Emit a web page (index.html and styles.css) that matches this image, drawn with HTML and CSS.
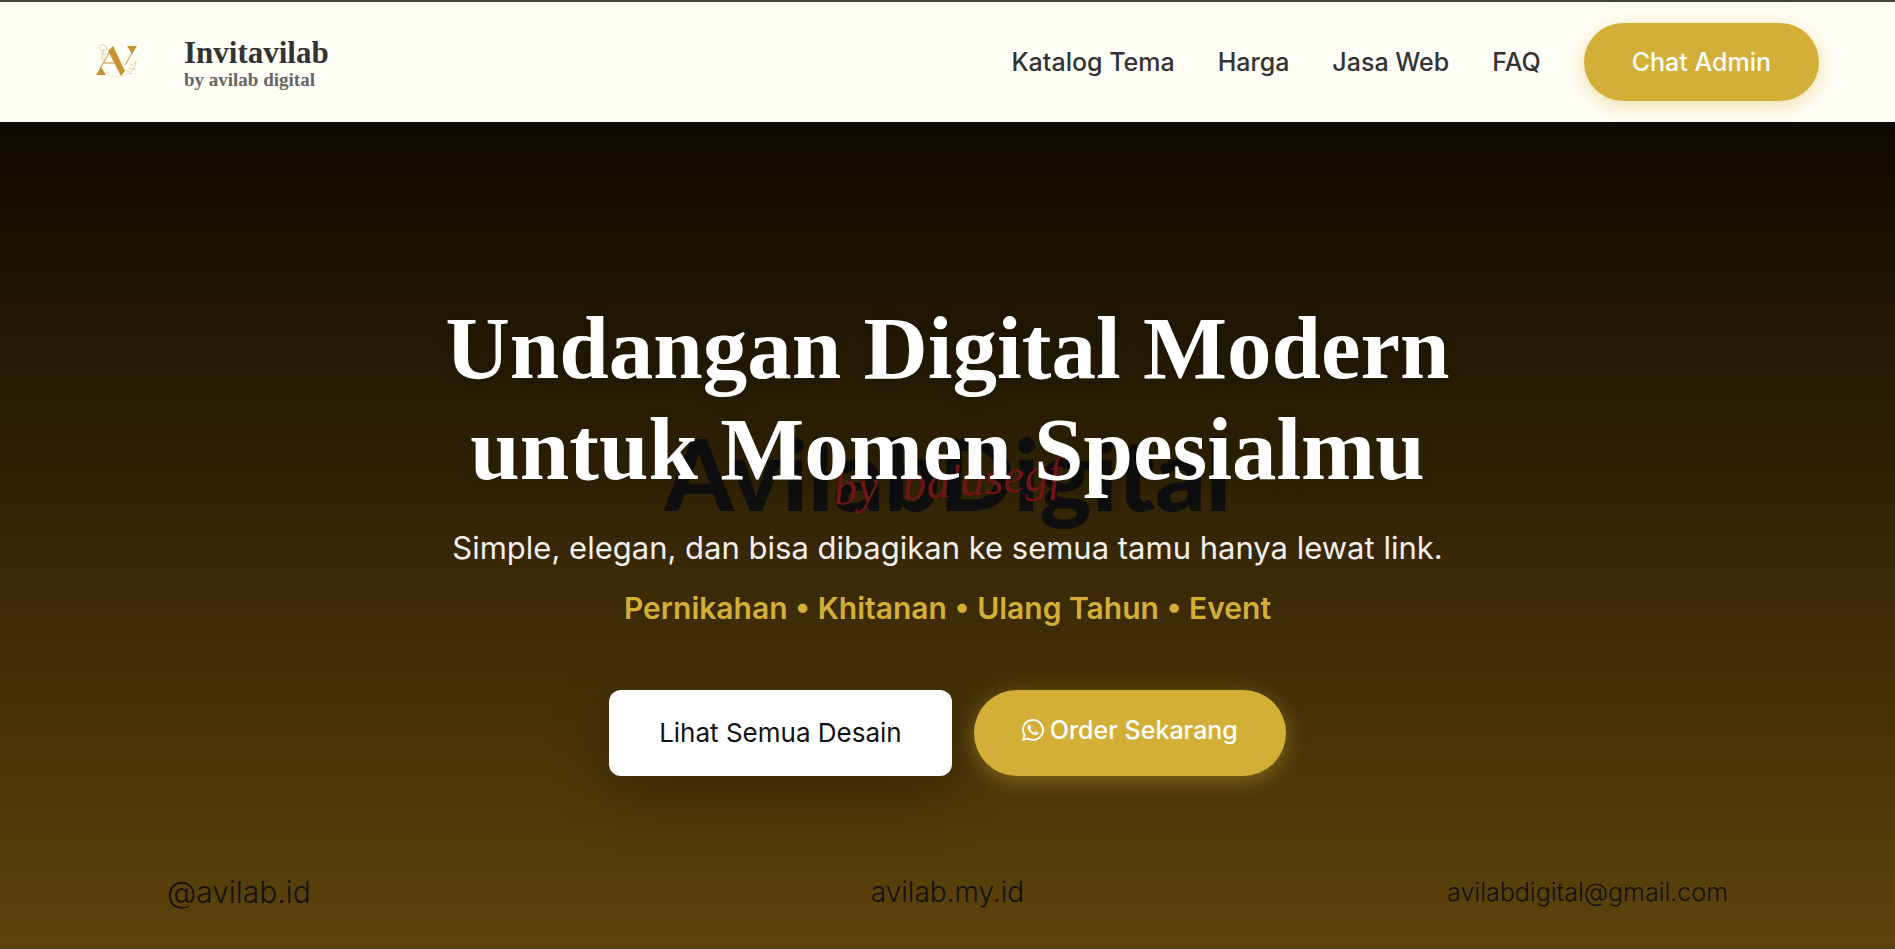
FILE: index.html
```html
<!DOCTYPE html>
<html lang="id">
<head>
    <meta charset="UTF-8">
    <meta name="viewport" content="width=device-width, initial-scale=1.0">
    <title>Invitavilab by avilab digital</title>
    <link rel="stylesheet" href="styles.css">
</head>
<body>

    <!-- Navbar -->
    <header class="navbar">
        <a href="#" class="brand">
            <svg class="brand-logo" viewBox="0 0 42 36" aria-hidden="true">
                <g fill="none" stroke="#e6d2a5" stroke-width="1">
                    <path d="M7 17C5 13 6 9 8 6M8 6a3 3 0 1 1 1-4a2 2 0 0 1-1 4M5 8l3 2M10 9l-2 3M5 13l3 1M10 14l-2 3"/>
                    <path d="M36 26c3-3 4-6 3-9M37 21l-3-1M38 19l3-1M36 25l-4-1M36 25l4 0M33 28l-3-2M33 29l3 1"/>
                    <path d="M9 25C13 35 29 36 36 26" stroke-width="0.5"/>
                </g>
                <g fill="#c5932f">
                    <path d="M12 7L17 2L29 27L25 32Z"/>
                    <path d="M31 2H41L36 10Z"/>
                    <path d="M0 31L5 23L10 31Z"/>
                </g>
                <path d="M36 9L29 21M4 25L13 9M7 19H18" fill="none" stroke="#c5932f" stroke-width="1"/>
            </svg>
            <span class="brand-text">
                <span class="brand-name">Invitavilab</span>
                <span class="brand-sub">by avilab digital</span>
            </span>
        </a>
        <nav class="menu">
            <a href="#katalog">Katalog Tema</a>
            <a href="#harga">Harga</a>
            <a href="#jasa">Jasa Web</a>
            <a href="#faq">FAQ</a>
            <a href="#chat" class="btn-chat">Chat Admin</a>
        </nav>
    </header>

    <!-- Hero -->
    <main class="hero">
        <div class="watermark" aria-hidden="true">AvilabDigital<span class="watermark-sign">by&nbsp; ba'asegf</span></div>

        <div class="hero-content">
            <h1>Undangan Digital Modern<br>untuk Momen Spesialmu</h1>
            <p class="lead">Simple, elegan, dan bisa dibagikan ke semua tamu hanya lewat link.</p>
            <p class="tagline">Pernikahan • Khitanan • Ulang Tahun • Event</p>
            <div class="actions">
                <a href="#katalog" class="btn-light">Lihat Semua Desain</a>
                <a href="#order" class="btn-order">
                    <svg class="icon-wa" viewBox="0 0 16 16" fill="currentColor" aria-hidden="true">
                        <path d="M13.601 2.326A7.85 7.85 0 0 0 7.994 0C3.627 0 .068 3.558.064 7.926c0 1.399.366 2.76 1.057 3.965L0 16l4.204-1.102a7.9 7.9 0 0 0 3.79.965h.004c4.368 0 7.926-3.558 7.93-7.93A7.9 7.9 0 0 0 13.6 2.326zM7.994 14.521a6.6 6.6 0 0 1-3.356-.92l-.24-.144-2.494.654.666-2.433-.156-.251a6.56 6.56 0 0 1-1.007-3.505c0-3.626 2.957-6.584 6.591-6.584a6.56 6.56 0 0 1 4.66 1.931 6.56 6.56 0 0 1 1.928 4.66c-.004 3.639-2.961 6.592-6.592 6.592m3.615-4.934c-.197-.099-1.17-.578-1.353-.646-.182-.065-.315-.099-.445.099-.133.197-.513.646-.627.775-.114.133-.232.148-.43.05-.197-.1-.836-.308-1.592-.985-.59-.525-.985-1.175-1.103-1.372-.114-.198-.011-.304.088-.403.087-.088.197-.232.296-.346.1-.114.133-.198.198-.33.065-.134.034-.248-.015-.347-.05-.099-.445-1.076-.612-1.47-.16-.389-.323-.335-.445-.34-.114-.007-.247-.007-.38-.007a.73.73 0 0 0-.529.247c-.182.198-.691.677-.691 1.654s.71 1.916.81 2.049c.098.133 1.394 2.132 3.383 2.992.47.205.84.326 1.129.418.475.152.904.129 1.246.08.38-.058 1.171-.48 1.338-.943.164-.464.164-.86.114-.943-.049-.084-.182-.133-.38-.232"/>
                    </svg>
                    <span>Order Sekarang</span>
                </a>
            </div>
        </div>

        <div class="contacts">
            <span class="contact contact-ig">@avilab.id</span>
            <span class="contact contact-web">avilab.my.id</span>
            <span class="contact contact-mail">avilabdigital@gmail.com</span>
        </div>
    </main>

</body>
</html>
```
FILE: styles.css
```css
:root {
    --gold: #d4af37;
    --ink: #111111;
    --cream: #fffef6;
    --serif: "Liberation Serif", serif;
    --sans: Inter, sans-serif;
}

* {
    box-sizing: border-box;
}

body {
    margin: 0;
    min-height: 100vh;
    display: flex;
    flex-direction: column;
    border-top: 2px solid #44443f;
    border-bottom: 1px solid #44443f;
    font-family: var(--sans);
}

a {
    text-decoration: none;
}

/* Navbar */
.navbar {
    display: flex;
    justify-content: space-between;
    align-items: center;
    height: 120px;
    padding: 0 76px 0 96px;
    background: var(--cream);
}

.brand {
    display: flex;
    align-items: center;
    gap: 46px;
}

.brand-logo {
    width: 42px;
    height: 36px;
}

.brand-text {
    display: flex;
    flex-direction: column;
    padding-top: 4px;
    font-family: var(--serif);
    font-weight: 700;
}

.brand-name {
    font-size: 31px;
    line-height: 32px;
    color: #333333;
}

.brand-sub {
    font-size: 19px;
    line-height: 22px;
    color: #666666;
}

.menu {
    display: flex;
    align-items: center;
    gap: 43px;
    font-size: 25px;
    font-weight: 500;
}

.menu a {
    color: #333333;
}

.menu .btn-chat {
    padding: 24px 48px;
    line-height: 30px;
    border-radius: 40px;
    background: var(--gold);
    color: #ffffff;
    box-shadow: 0 5px 20px rgba(212, 175, 55, 0.4);
}

/* Hero */
.hero {
    position: relative;
    flex: 1;
    display: flex;
    flex-direction: column;
    background: linear-gradient(#0e0900, #5d430b);
}

.watermark {
    position: absolute;
    top: 295px;
    left: 0;
    right: 0;
    text-align: center;
    font-family: Lato, sans-serif;
    font-size: 99px;
    line-height: 112px;
    font-weight: 900;
    color: #0e0e0e;
}

.watermark-sign {
    position: absolute;
    top: 8px;
    left: 0;
    right: 0;
    font-family: "Liberation Serif", cursive;
    font-size: 48px;
    font-style: italic;
    font-weight: 400;
    color: #741618;
    transform: rotate(-4deg);
}

.hero-content {
    position: relative;
    padding-top: 176px;
    text-align: center;
}

h1 {
    margin: 0;
    font-family: var(--serif);
    font-size: 89px;
    line-height: 101px;
    font-weight: 700;
    color: #ffffff;
    text-shadow: 0 4px 15px rgba(0, 0, 0, 0.2);
}

.lead {
    margin: 26px 0 0;
    font-size: 31px;
    line-height: 44px;
    color: #f3f0ea;
}

.tagline {
    margin: 16px 0 0;
    font-size: 30px;
    line-height: 44px;
    font-weight: 600;
    color: var(--gold);
}

.actions {
    display: flex;
    justify-content: center;
    gap: 22px;
    margin-top: 60px;
}

.btn-light,
.btn-order {
    display: flex;
    align-items: center;
    height: 86px;
    line-height: 30px;
}

.btn-light {
    padding: 0 50px;
    border-radius: 12px;
    background: #ffffff;
    color: var(--ink);
    font-size: 26px;
    box-shadow: 0 20px 60px rgba(0, 0, 0, 0.25);
}

.btn-order {
    gap: 6px;
    padding: 0 48px 6px;
    border-radius: 43px;
    background: var(--gold);
    color: #ffffff;
    font-size: 25px;
    font-weight: 500;
    box-shadow: 0 5px 20px rgba(212, 175, 55, 0.4);
}

.icon-wa {
    width: 22px;
    height: 22px;
}

.contacts {
    display: flex;
    justify-content: space-between;
    margin-top: auto;
    padding: 0 167px 38px;
    line-height: 36px;
    font-weight: 300;
    color: var(--ink);
}

.contact {
    flex: 1;
}

.contact-ig {
    font-size: 30px;
}

.contact-web {
    font-size: 28px;
    text-align: center;
}

.contact-mail {
    font-size: 25px;
    text-align: right;
}
```
